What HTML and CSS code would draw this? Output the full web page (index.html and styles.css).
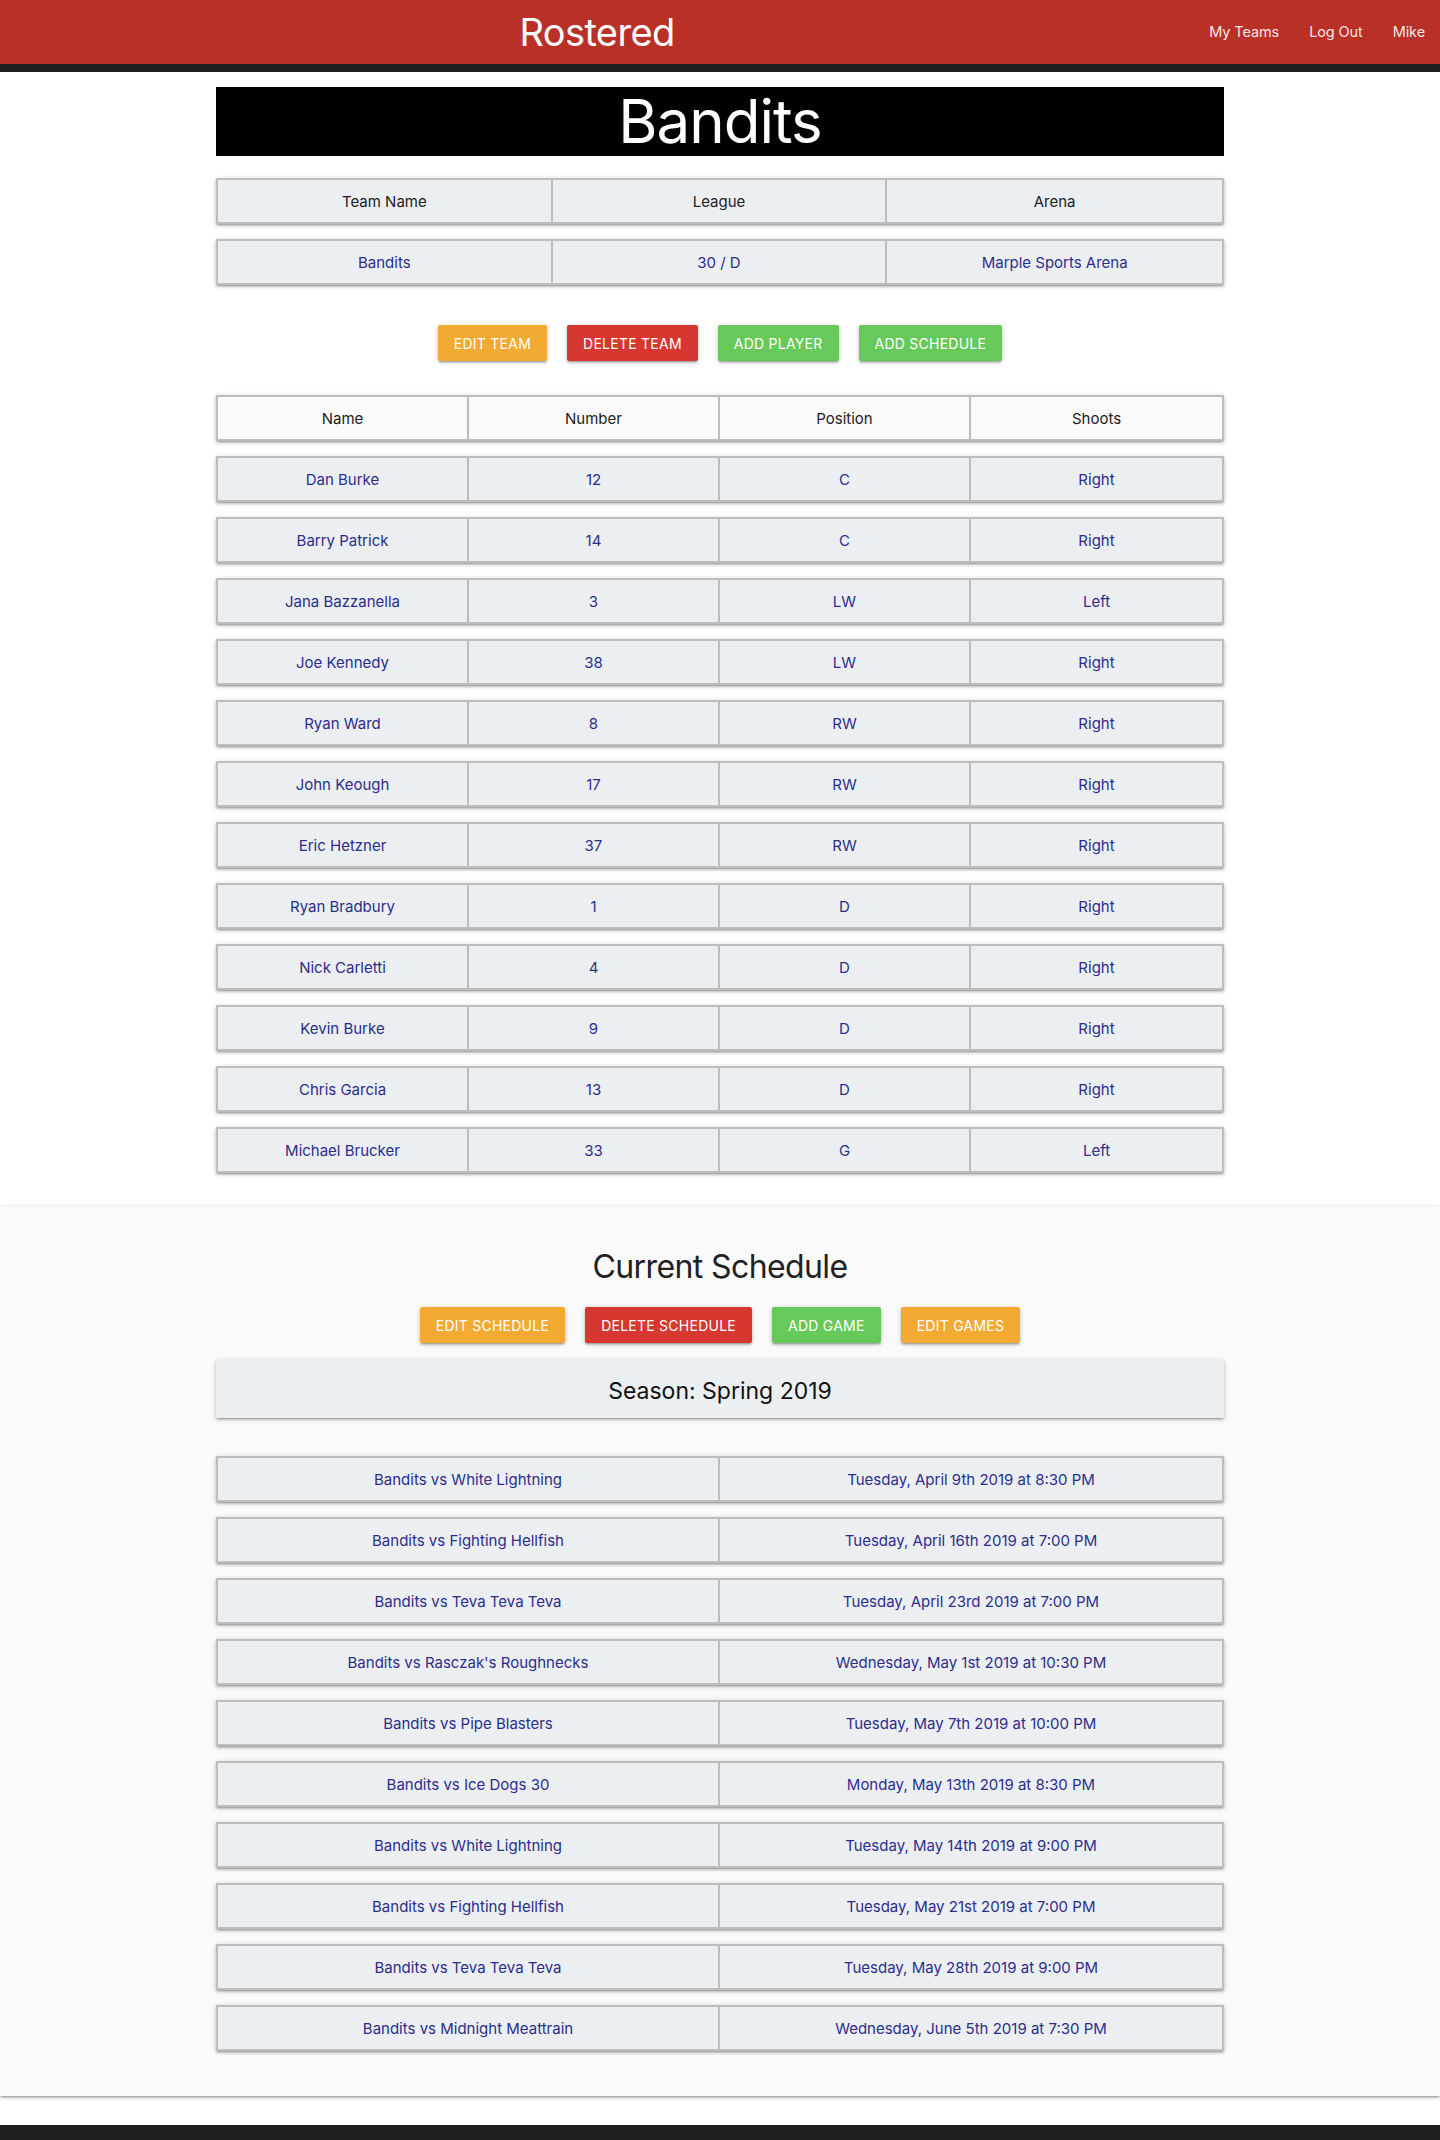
FILE: index.html
```html
<!DOCTYPE html>
<html lang="en">
<head>
<meta charset="utf-8">
<title>Rostered - Bandits</title>
<link rel="stylesheet" href="styles.css">
</head>
<body>
<header class="nav">
  <div class="nav-bar">
    <a class="brand" href="#">Rostered</a>
    <ul class="nav-links">
      <li><a href="#">My Teams</a></li>
      <li><a href="#">Log Out</a></li>
      <li><a href="#">Mike</a></li>
    </ul>
  </div>
  <div class="nav-strip"></div>
</header>

<main>
  <section class="team">
    <h1 class="team-title">Bandits</h1>

    <div class="rows">
      <div class="row cols-3 head-light">
        <div class="cell">Team Name</div>
        <div class="cell">League</div>
        <div class="cell">Arena</div>
      </div>
      <div class="row cols-3 data">
        <div class="cell">Bandits</div>
        <div class="cell">30 / D</div>
        <div class="cell">Marple Sports Arena</div>
      </div>
    </div>

    <div class="actions team-actions">
      <a class="btn orange" href="#">Edit Team</a>
      <a class="btn red" href="#">Delete Team</a>
      <a class="btn green" href="#">Add Player</a>
      <a class="btn green" href="#">Add Schedule</a>
    </div>

    <div class="rows roster">
      <div class="row cols-4 head-white">
        <div class="cell">Name</div>
        <div class="cell">Number</div>
        <div class="cell">Position</div>
        <div class="cell">Shoots</div>
      </div>
      <div class="row cols-4 data"><div class="cell">Dan Burke</div><div class="cell">12</div><div class="cell">C</div><div class="cell">Right</div></div>
      <div class="row cols-4 data"><div class="cell">Barry Patrick</div><div class="cell">14</div><div class="cell">C</div><div class="cell">Right</div></div>
      <div class="row cols-4 data"><div class="cell">Jana Bazzanella</div><div class="cell">3</div><div class="cell">LW</div><div class="cell">Left</div></div>
      <div class="row cols-4 data"><div class="cell">Joe Kennedy</div><div class="cell">38</div><div class="cell">LW</div><div class="cell">Right</div></div>
      <div class="row cols-4 data"><div class="cell">Ryan Ward</div><div class="cell">8</div><div class="cell">RW</div><div class="cell">Right</div></div>
      <div class="row cols-4 data"><div class="cell">John Keough</div><div class="cell">17</div><div class="cell">RW</div><div class="cell">Right</div></div>
      <div class="row cols-4 data"><div class="cell">Eric Hetzner</div><div class="cell">37</div><div class="cell">RW</div><div class="cell">Right</div></div>
      <div class="row cols-4 data"><div class="cell">Ryan Bradbury</div><div class="cell">1</div><div class="cell">D</div><div class="cell">Right</div></div>
      <div class="row cols-4 data"><div class="cell">Nick Carletti</div><div class="cell">4</div><div class="cell">D</div><div class="cell">Right</div></div>
      <div class="row cols-4 data"><div class="cell">Kevin Burke</div><div class="cell">9</div><div class="cell">D</div><div class="cell">Right</div></div>
      <div class="row cols-4 data"><div class="cell">Chris Garcia</div><div class="cell">13</div><div class="cell">D</div><div class="cell">Right</div></div>
      <div class="row cols-4 data"><div class="cell">Michael Brucker</div><div class="cell">33</div><div class="cell">G</div><div class="cell">Left</div></div>
    </div>
  </section>

  <section class="schedule">
    <div class="schedule-inner">
      <h2 class="schedule-title">Current Schedule</h2>
      <div class="actions schedule-actions">
        <a class="btn orange" href="#">Edit Schedule</a>
        <a class="btn red" href="#">Delete Schedule</a>
        <a class="btn green" href="#">Add Game</a>
        <a class="btn orange" href="#">Edit Games</a>
      </div>
      <div class="season">Season: Spring 2019</div>

      <div class="rows games">
        <div class="row cols-2 data"><div class="cell">Bandits vs White Lightning</div><div class="cell">Tuesday, April 9th 2019 at 8:30 PM</div></div>
        <div class="row cols-2 data"><div class="cell">Bandits vs Fighting Hellfish</div><div class="cell">Tuesday, April 16th 2019 at 7:00 PM</div></div>
        <div class="row cols-2 data"><div class="cell">Bandits vs Teva Teva Teva</div><div class="cell">Tuesday, April 23rd 2019 at 7:00 PM</div></div>
        <div class="row cols-2 data"><div class="cell">Bandits vs Rasczak's Roughnecks</div><div class="cell">Wednesday, May 1st 2019 at 10:30 PM</div></div>
        <div class="row cols-2 data"><div class="cell">Bandits vs Pipe Blasters</div><div class="cell">Tuesday, May 7th 2019 at 10:00 PM</div></div>
        <div class="row cols-2 data"><div class="cell">Bandits vs Ice Dogs 30</div><div class="cell">Monday, May 13th 2019 at 8:30 PM</div></div>
        <div class="row cols-2 data"><div class="cell">Bandits vs White Lightning</div><div class="cell">Tuesday, May 14th 2019 at 9:00 PM</div></div>
        <div class="row cols-2 data"><div class="cell">Bandits vs Fighting Hellfish</div><div class="cell">Tuesday, May 21st 2019 at 7:00 PM</div></div>
        <div class="row cols-2 data"><div class="cell">Bandits vs Teva Teva Teva</div><div class="cell">Tuesday, May 28th 2019 at 9:00 PM</div></div>
        <div class="row cols-2 data"><div class="cell">Bandits vs Midnight Meattrain</div><div class="cell">Wednesday, June 5th 2019 at 7:30 PM</div></div>
      </div>
    </div>
  </section>
</main>

<footer class="footer"></footer>
</body>
</html>
```

FILE: styles.css
```css
* { box-sizing: border-box; }

html, body {
  margin: 0;
  padding: 0;
}

body {
  font-family: Inter, "Noto Sans", Roboto, sans-serif;
  font-size: 15px;
  color: #212121;
  background: #ffffff;
}

a { text-decoration: none; color: inherit; }

/* ---------- Nav ---------- */
.nav-bar {
  height: 64px;
  background: #b93027;
  display: flex;
  align-items: center;
}

.brand {
  flex: 1;
  text-align: center;
  color: #ffffff;
  font-size: 38px;
  font-weight: 400;
  letter-spacing: -0.6px;
  line-height: 64px;
}

.nav-links {
  list-style: none;
  margin: 0;
  padding: 0;
  display: flex;
  height: 64px;
}

.nav-links a {
  display: block;
  padding: 0 15px;
  line-height: 64px;
  font-size: 14.5px;
  letter-spacing: -0.1px;
  color: rgba(255, 255, 255, 0.9);
}

.nav-strip {
  height: 8px;
  background: #1f1f1f;
}

/* ---------- Team section ---------- */
.team {
  width: 1008px;
  margin: 0 auto;
  padding-top: 15px;
  padding-bottom: 34px;
}

.team-title {
  margin: 0;
  background: #000000;
  color: #ffffff;
  text-align: center;
  font-size: 60px;
  font-weight: 400;
  letter-spacing: -1px;
  line-height: 69px;
  height: 69px;
}

.rows {
  display: flex;
  flex-direction: column;
  gap: 15px;
}

.team-title + .rows { margin-top: 22px; }

.row {
  display: grid;
  height: 46px;
  border: 2px solid #bdbdbd;
  box-shadow: 0 2px 2px 0 rgba(0,0,0,0.14), 0 3px 1px -2px rgba(0,0,0,0.12), 0 1px 5px 0 rgba(0,0,0,0.2);
  background: #eceff1;
}

.cols-2 { grid-template-columns: repeat(2, 1fr); }
.cols-3 { grid-template-columns: repeat(3, 1fr); }
.cols-4 { grid-template-columns: repeat(4, 1fr); }

.cell {
  display: flex;
  align-items: center;
  justify-content: center;
  border-right: 2px solid #bdbdbd;
  font-size: 15px;
}

.cell:last-child { border-right: none; }

.head-light { background: #eceff1; color: #212121; }
.head-white { background: #fafafa; color: #212121; }
.data { color: #2b2d8e; }

/* ---------- Buttons ---------- */
.actions {
  display: flex;
  justify-content: center;
  gap: 20px;
}

.team-actions {
  margin: 40px 0 34px;
}

.btn {
  display: inline-flex;
  align-items: center;
  height: 36px;
  padding: 0 16px;
  border-radius: 2px;
  color: #ffffff;
  font-size: 14px;
  letter-spacing: 0.25px;
  text-transform: uppercase;
  box-shadow: 0 2px 2px 0 rgba(0,0,0,0.14), 0 3px 1px -2px rgba(0,0,0,0.12), 0 1px 5px 0 rgba(0,0,0,0.2);
}

.btn.orange { background: #f2aa33; }
.btn.red { background: #d63730; }
.btn.green { background: #66c95a; }

/* ---------- Schedule ---------- */
.schedule {
  background: #fafafa;
  box-shadow: 0 2px 2px 0 rgba(0,0,0,0.14), 0 3px 1px -2px rgba(0,0,0,0.12), 0 1px 5px 0 rgba(0,0,0,0.2);
  padding: 41px 0 45px;
}

.schedule-inner {
  width: 1008px;
  margin: 0 auto;
}

.schedule-title {
  margin: 0;
  text-align: center;
  font-size: 32px;
  font-weight: 400;
  letter-spacing: -0.6px;
  line-height: 38px;
  color: #212121;
}

.schedule-actions {
  margin: 21px 0 17px;
}

.season {
  height: 58px;
  padding-top: 3px;
  background: #eceff1;
  display: flex;
  align-items: center;
  justify-content: center;
  font-size: 23px;
  color: #111111;
  box-shadow: 0 2px 2px 0 rgba(0,0,0,0.14), 0 3px 1px -2px rgba(0,0,0,0.12), 0 1px 5px 0 rgba(0,0,0,0.2);
}

.games { margin-top: 38px; }

/* ---------- Footer ---------- */
.footer {
  margin-top: 29px;
  height: 64px;
  background: #1f1f1f;
}
```
